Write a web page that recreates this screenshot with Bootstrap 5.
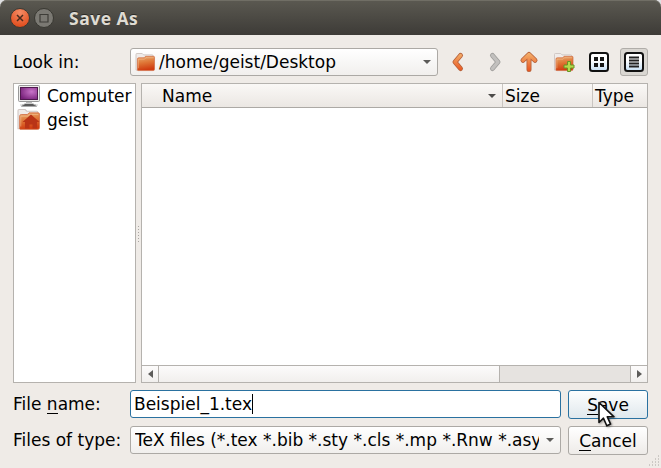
<!DOCTYPE html>
<html lang="en">
<head>
<meta charset="utf-8">
<title>Save As</title>
<link href="https://cdn.jsdelivr.net/npm/bootstrap@5.3.0/dist/css/bootstrap.min.css" rel="stylesheet">
<style>
body{font:17px/20px "DejaVu Sans",sans-serif;color:#000;background:#dfe0e2}
.dialog{width:661px;height:468px;background:#efebe7;border-radius:7px 7px 0 0}
.titlebar{height:35px;background:linear-gradient(#5b5951,#3d3b37);padding-left:10px;box-shadow:inset 0 1px #706e65;border-radius:7px 7px 0 0;font:bold 17.5px/20px "Open Sans",sans-serif;color:#dfdbd2;text-shadow:0 -1px #2b2a26}
.win-btn{width:20px;height:20px;margin-right:4px}
.win-title{margin-left:11px;letter-spacing:.5px;padding-top:1px}
.content{height:433px;padding:13px 13px 0}
.field-label{width:117px}
.box{height:28px;border:1px solid #aca9a5;border-radius:3px;background:linear-gradient(#fff,#f1efed)}
.line{gap:7px}
.tool{width:28px;height:28px}
.tool.on{border:1px solid #b0ada9;border-radius:3px;background:#d9d6d1}
.panes{height:300px;margin:7px 0}
.pane{border:1px solid #b5b2ae;background:#fff}
.side{width:123px;padding:0 0 0 4px}
.side>div{height:24px;gap:6px}
.splitter{width:5px}
.head{height:24px;background:linear-gradient(#faf8f6,#ebe7e3);border-bottom:1px solid #aca9a5}
.head>div{padding-left:2px}
.c1{width:361px;border-right:1px solid #c9c5c1}
.c2{width:90px;border-right:1px solid #c9c5c1}
.head>.c1{padding:0 5px 0 20px}
.scroll{height:17px;border-top:1px solid #b5b2ae;background:#e6e3e0}
.sb-end{width:17px;background:linear-gradient(#fcfbfb,#f1efed)}
.sb-end.first{width:16px}
.sb-thumb{width:342px;border:solid #b5b2ae;border-width:0 1px;background:linear-gradient(#fcfbfb,#f1efed)}
.entry{border-color:#2a71a0;background:#fff;padding-left:3px}
.caret{width:1px;height:20px;background:#000}
.path{padding-left:3px}
.drop{margin-right:5px}
.filter{width:404px}
.home{margin-left:-1px}
.push{width:80px;height:29px;border:1px solid #aca9a5;border-radius:3px;background:linear-gradient(#fff,#eeebe8);font-size:17px;line-height:20px;padding:0}
.push.def{border-color:#2a71a0;background:linear-gradient(#fdfefe,#e0e8ed)}
.key{border-bottom:1px solid #000;display:inline-block;line-height:17px}
.pointer{left:597px;top:401px;filter:drop-shadow(1px 1px 1px rgba(0,0,0,.35))}
.grip{right:1px;bottom:1px}
svg{display:block;flex:none}
</style>
<script src="https://cdn.jsdelivr.net/npm/bootstrap@5.3.0/dist/js/bootstrap.bundle.min.js"></script>
</head>
<body class="overflow-hidden">
<svg width="0" height="0" class="position-absolute">
<defs>
<linearGradient id="or" x2=".2" y2="1"><stop stop-color="#e9ae74"/><stop offset=".5" stop-color="#df7636"/><stop offset="1" stop-color="#d03c10"/></linearGradient>
<linearGradient id="arw" gradientUnits="userSpaceOnUse" x1="0" y1="4" x2="0" y2="24"><stop stop-color="#f3b670"/><stop offset="1" stop-color="#e94f1c"/></linearGradient>
<linearGradient id="bl" x2="0" y2="1"><stop offset=".4" stop-color="#fff"/><stop offset="1" stop-color="#c5dff5"/></linearGradient>
<radialGradient id="scr" cx=".65" cy=".35" r=".75"><stop stop-color="#c873c8"/><stop offset="1" stop-color="#762079"/></radialGradient>
<radialGradient id="cl" cy=".2" r=".8"><stop stop-color="#f68b64"/><stop offset="1" stop-color="#df4a1a"/></radialGradient>
<symbol id="folder" viewBox="0 0 21 20"><path d="M.5 18V1.500Q.5.5 1.500.5H7l1.500 1.500H17.500q1 0 1 1V8H3v10z" fill="#f0ecea" stroke="#cfc6c3"/><path d="M2 18V6.500Q2 5 3.500 5H9l1.500-1.500H19q1 0 1 1V17q0 1.500-1.500 1.500H3Q2 18.500 2 18z" fill="url(#or)" stroke="#d0683f" stroke-width=".7"/><path d="M3 16V6.500h6.500L11 5h8" fill="none" stroke="#f7cfa5" stroke-opacity=".45"/></symbol>
</defs></svg>
<main class="dialog position-relative">
<header class="titlebar d-flex align-items-center">
<svg class="win-btn" viewBox="0 0 20 20"><circle cx="10" cy="10" r="9.500" fill="url(#cl)" stroke="#393832"/><path d="M7 7l6 6m0-6l-6 6" stroke="#4b2b1d" stroke-width="1.500"/></svg>
<svg class="win-btn" viewBox="0 0 20 20"><circle cx="10" cy="10" r="9.500" fill="#7b7973" stroke="#393832"/><path d="M6 6.500h8v7.500H6z" fill="none" stroke="#3e3d38" stroke-width="1.200"/></svg>
<span class="win-title">Save As</span>
</header>
<div class="content">
<div class="d-flex">
<label class="field-label align-self-center">Look in:</label>
<div class="d-flex line flex-grow-1">
<div class="box d-flex align-items-center flex-grow-1 ps-1">
<svg width="21" height="19"><use href="#folder"/></svg><span class="flex-grow-1 path">/home/geist/Desktop</span>
<svg width="10" height="6" class="drop"><path d="M1 1h8L5 5z" fill="#5c5b59"/></svg>
</div>
<svg class="tool"><path d="M15.500 7.500L10 14l5.500 6.500" fill="none" stroke="#b7623b" stroke-width="5" stroke-linecap="round" stroke-linejoin="round"/><path d="M15.500 7.500L10 14l5.500 6.500" fill="none" stroke="url(#arw)" stroke-width="3.300" stroke-linecap="round" stroke-linejoin="round"/></svg>
<svg class="tool"><path d="M12.500 7.500L18 14l-5.500 6.500" fill="none" stroke="#a09f9d" stroke-width="5" stroke-linecap="round" stroke-linejoin="round"/><path d="M12.500 7.500L18 14l-5.500 6.500" fill="none" stroke="#c2c0be" stroke-width="3.300" stroke-linecap="round" stroke-linejoin="round"/></svg>
<svg class="tool"><path d="M14 21.500V8M8 12.300L14 6.500l6 5.800" fill="none" stroke="#b7623b" stroke-width="5" stroke-linecap="round" stroke-linejoin="round"/><path d="M8 12.300L14 6.500l6 5.800M14 21.500V8" fill="none" stroke="url(#arw)" stroke-width="3.300" stroke-linecap="round" stroke-linejoin="round"/></svg>
<svg class="tool"><use href="#folder" x="3.500" y="5" width="21" height="19"/><path d="M17.500 13.500h3v3.500H24v3h-3.500v3.500h-3V20H14v-3h3.500z" fill="#b5d94c" stroke="#689424"/></svg>
<svg class="tool"><rect x="5" y="5" width="18" height="18" rx="2.500" fill="url(#bl)" stroke="#111" stroke-width="2"/><path d="M9 9h4v4H9zm6 0h4v4h-4zm-6 6h4v4H9zm6 0h4v4h-4z" fill="#151515"/></svg>
<div class="tool on"><svg width="26" height="26"><rect x="4" y="4" width="18" height="18" rx="2.500" fill="url(#bl)" stroke="#111" stroke-width="2"/><path d="M8 8.500h10m-10 3h10m-10 3h10m-10 3h10" stroke="#222" stroke-width="1.800"/></svg></div>
</div>
</div>
<div class="panes d-flex">
<div class="pane side">
<div class="d-flex align-items-center"><svg width="23" height="22"><rect x=".5" y=".5" width="21" height="16" rx="1" fill="#ecebea" stroke="#999"/><rect x="2.500" y="2.500" width="17" height="12" fill="url(#scr)" stroke="#50194f"/><path d="M8 17h6v3H8z" fill="#bbb"/><path d="M3 21.500l2-2.500h12l2 2.500z" fill="#5a5a5a"/><path d="M2 20h3l2-1.500h8l2 1.500h3" fill="none" stroke="#ccc"/></svg><span>Computer</span></div>
<div class="d-flex align-items-center"><svg width="24" height="22" class="home"><use href="#folder" width="24" height="22"/><path d="M14 5.500L5.500 13H8v6.500h4.500v-4h3v4H20V13h2.500z" fill="#b93416"/></svg><span>geist</span></div>
</div>
<div class="splitter d-flex align-items-center justify-content-center"><svg width="1" height="17"><path d="M.5 1v16" stroke="#aaa6a2" stroke-dasharray="1 2"/></svg></div>
<div class="pane flex-grow-1 d-flex flex-column">
<div class="head d-flex">
<div class="c1 d-flex align-items-center justify-content-between"><span>Name</span><svg width="10" height="6"><path d="M1 1h8L5 5z" fill="#4c4b49"/></svg></div>
<div class="c2 d-flex align-items-center">Size</div><div class="d-flex align-items-center">Type</div>
</div>
<div class="flex-grow-1"></div>
<div class="scroll d-flex justify-content-between">
<div class="d-flex"><div class="sb-end first d-flex align-items-center justify-content-center"><svg width="5" height="8"><path d="M5 0v8L0 4z" fill="#5c5b59"/></svg></div><div class="sb-thumb"></div></div>
<div class="sb-end d-flex align-items-center justify-content-center border-start" style="--bs-border-color:#b5b2ae"><svg width="5" height="8"><path d="M0 0v8l5-4z" fill="#5c5b59"/></svg></div>
</div>
</div>
</div>
<div class="d-flex">
<label class="field-label pt-1">File <span class="key">n</span>ame:</label>
<div class="d-flex line flex-grow-1">
<div class="box entry flex-grow-1 d-flex align-items-center"><span>Beispiel_1.tex</span><i class="caret"></i></div>
<button class="push def"><span class="key">S</span>ave</button>
</div>
</div>
<div class="d-flex pt-2" style="margin-top:-1px">
<label class="field-label pt-1">Files of type:</label>
<div class="d-flex line flex-grow-1">
<div class="box d-flex align-items-center flex-grow-1 ps-1"><span class="overflow-hidden text-nowrap filter">TeX files (*.tex *.bib *.sty *.cls *.mp *.Rnw *.asy</span><svg width="10" height="6" class="ms-auto drop"><path d="M1 1h8L5 5z" fill="#5c5b59"/></svg></div>
<button class="push flex-shrink-0"><span class="key">C</span>ancel</button>
</div>
</div>
</div>
<svg class="grip position-absolute" width="12" height="12"><path d="M10 1h1M7 4h1m2 0h1M4 7h1m2 0h1m2 0h1M1 10h1m2 0h1m2 0h1m2 0h1" stroke="#aaa6a2"/></svg>
<svg class="pointer position-absolute" width="20" height="28"><path d="M2 1.500v20l4.500-4.300 3.300 7.600 3.800-1.700-3.300-7.300H17z" fill="#fff" stroke="#111" stroke-width="1.600" stroke-linejoin="round"/></svg>
</main>
</body>
</html>
